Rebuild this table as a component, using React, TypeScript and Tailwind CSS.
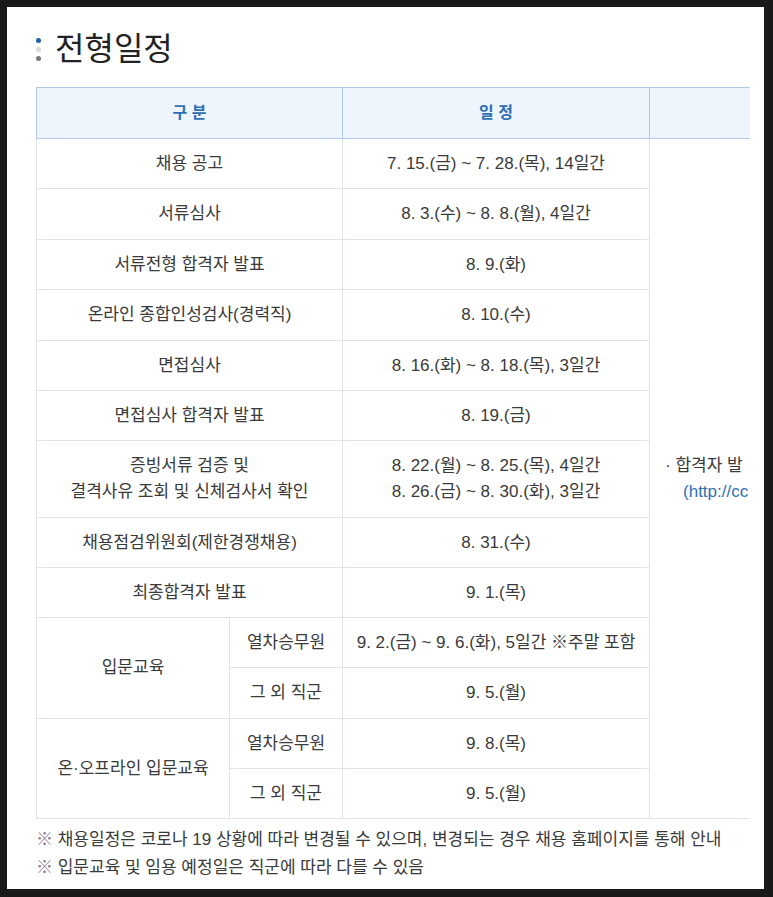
export default function App() {
  const font = { fontFamily: '"Liberation Sans", "Noto Sans CJK KR", sans-serif' }
  const cell = 'border border-[#dfe3ec] text-center align-middle'
  const rows: [string, string, string][] = [
    ['채용 공고', '7. 15.(금) ~ 7. 28.(목), 14일간', 'h-[50px]'],
    ['서류심사', '8. 3.(수) ~ 8. 8.(월), 4일간', 'h-[51px]'],
    ['서류전형 합격자 발표', '8. 9.(화)', 'h-[50px]'],
    ['온라인 종합인성검사(경력직)', '8. 10.(수)', 'h-[51px]'],
    ['면접심사', '8. 16.(화) ~ 8. 18.(목), 3일간', 'h-[50px]'],
    ['면접심사 합격자 발표', '8. 19.(금)', 'h-[50px]'],
  ]

  return (
    <div className="h-[897px] w-[773px] bg-[#191919] pb-[8px] pl-[7px] pr-[9px] pt-[7px]" style={font}>
      <div className="h-full w-full bg-white pl-[29px] pt-[20px]">
        {/* 제목 */}
        <div className="flex items-center gap-[14px]">
          <div className="flex flex-col gap-[4px]">
            <span className="h-[5px] w-[5px] rounded-full bg-[#1f5fae]"></span>
            <span className="h-[5px] w-[5px] rounded-full bg-[#d9d9dc]"></span>
            <span className="h-[5px] w-[5px] rounded-full bg-[#7a7377]"></span>
          </div>
          <h2 className="text-[32px] leading-[44px] text-[#222]">전형일정</h2>
        </div>

        {/* 일정 표 */}
        <div className="mt-[16px] w-[714px] overflow-hidden">
          <table className="w-[1000px] table-fixed border-collapse text-[17px] text-[#3a3a3a]">
            <colgroup>
              <col className="w-[193px]" />
              <col className="w-[113px]" />
              <col className="w-[307px]" />
              <col className="w-[387px]" />
            </colgroup>
            <thead>
              <tr className="h-[51px] bg-[#eef5fc]">
                <th colSpan={2} className="border border-[#aecbe8] text-[16px] font-bold text-[#2f6fb5]">
                  구 분
                </th>
                <th className="border border-[#aecbe8] text-[16px] font-bold text-[#2f6fb5]">일 정</th>
                <th className="border border-[#aecbe8]"></th>
              </tr>
            </thead>
            <tbody>
              {rows.map(([name, date, h], i) => (
                <tr key={name} className={h}>
                  <td colSpan={2} className={cell}>
                    {name}
                  </td>
                  <td className={cell}>{date}</td>
                  {i === 0 && (
                    <td rowSpan={13} className="border border-[#dfe3ec] pl-[15px] text-left align-middle leading-[26px] whitespace-nowrap">
                      <p>· 합격자 발</p>
                      <p className="pl-[18px] text-[#2f6fb5]">(http://cc</p>
                    </td>
                  )}
                </tr>
              ))}
              <tr className="h-[77px]">
                <td colSpan={2} className={`${cell} leading-[26px]`}>
                  증빙서류 검증 및
                  <br />
                  결격사유 조회 및 신체검사서 확인
                </td>
                <td className={`${cell} leading-[26px]`}>
                  8. 22.(월) ~ 8. 25.(목), 4일간
                  <br />
                  8. 26.(금) ~ 8. 30.(화), 3일간
                </td>
              </tr>
              <tr className="h-[50px]">
                <td colSpan={2} className={cell}>채용점검위원회(제한경쟁채용)</td>
                <td className={cell}>8. 31.(수)</td>
              </tr>
              <tr className="h-[50px]">
                <td colSpan={2} className={cell}>최종합격자 발표</td>
                <td className={cell}>9. 1.(목)</td>
              </tr>
              <tr className="h-[50px]">
                <td rowSpan={2} className={cell}>입문교육</td>
                <td className={cell}>열차승무원</td>
                <td className={cell}>9. 2.(금) ~ 9. 6.(화), 5일간 ※주말 포함</td>
              </tr>
              <tr className="h-[51px]">
                <td className={cell}>그 외 직군</td>
                <td className={cell}>9. 5.(월)</td>
              </tr>
              <tr className="h-[50px]">
                <td rowSpan={2} className={cell}>온·오프라인 입문교육</td>
                <td className={cell}>열차승무원</td>
                <td className={cell}>9. 8.(목)</td>
              </tr>
              <tr className="h-[50px]">
                <td className={cell}>그 외 직군</td>
                <td className={cell}>9. 5.(월)</td>
              </tr>
            </tbody>
          </table>

          {/* 안내 문구 */}
          <div className="mt-[7px] whitespace-nowrap text-[17px] leading-[28px] text-[#3a3a3a]">
            <p>
              <span className="text-[#8b7b92]">※</span> 채용일정은 코로나 19 상황에 따라 변경될 수 있으며, 변경되는 경우 채용 홈페이지를 통해 안내
            </p>
            <p>
              <span className="text-[#8b7b92]">※</span> 입문교육 및 임용 예정일은 직군에 따라 다를 수 있음
            </p>
          </div>
        </div>
      </div>
    </div>
  )
}
